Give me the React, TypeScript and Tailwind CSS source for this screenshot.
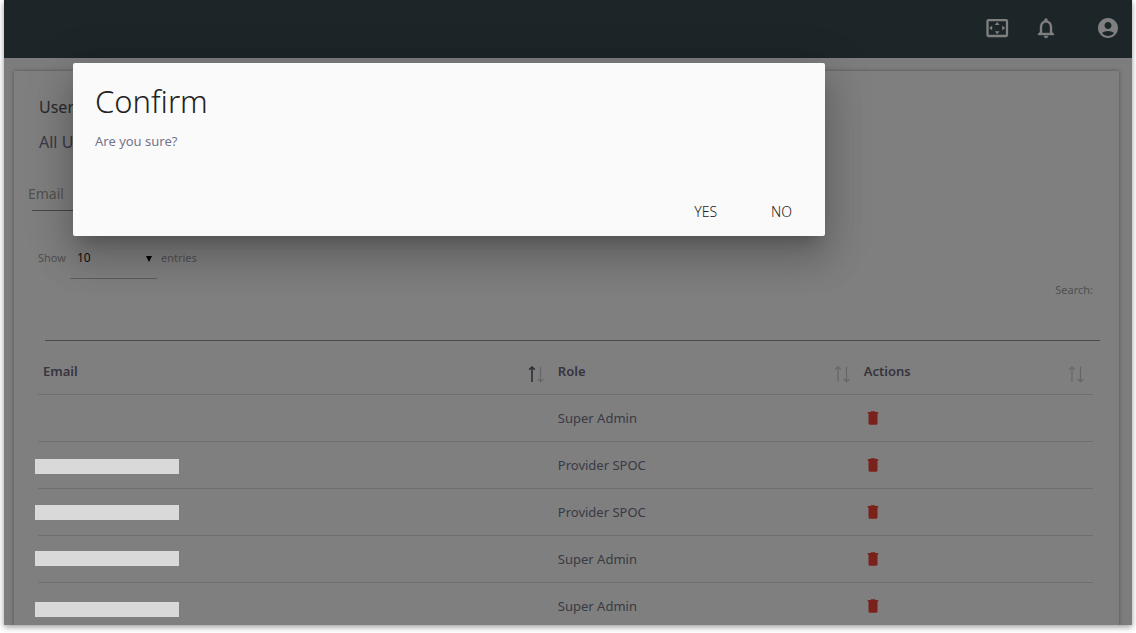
import { MdAccountCircle } from "react-icons/md";

const roles = ["Super Admin", "Provider SPOC", "Provider SPOC", "Super Admin", "Super Admin"];

function SortArrows({ ascending = false }: { ascending?: boolean }) {
  return (
    <svg width="18" height="18" viewBox="0 0 18 18" fill="none" aria-hidden="true" className="mt-1">
      <g className={ascending ? "stroke-[#5b5968]" : "stroke-[#d2d2d5]"} strokeWidth={ascending ? "1.6" : "1.3"}>
        <path d="M5 17V2.500" />
        <path d="M2.200 4.600 5 2l2.800 2.600" />
      </g>
      <g className="stroke-[#cdcdd1]" strokeWidth="1.3">
        <path d="M13.500 1.500V16" />
        <path d="M10.700 13.900 13.500 16.500l2.800-2.600" />
      </g>
    </svg>
  );
}

function OverscanIcon() {
  return (
    <svg width="24" height="24" viewBox="0 0 24 24" aria-hidden="true">
      <rect x="2.500" y="4.200" width="19.500" height="15.800" rx="1" fill="none" stroke="currentColor" strokeWidth="2.300" />
      <path fill="currentColor" d="M12.200 6 9.800 9h4.800zM12.200 18.200 14.600 15.200H9.800zM17.200 9.600v5l3-2.500zM7.200 9.600l-3 2.500 3 2.500z" />
    </svg>
  );
}

function BellIcon() {
  return (
    <svg width="24" height="24" viewBox="0 0 24 24" fill="currentColor" stroke="currentColor" strokeWidth="0.4" aria-hidden="true">
      <path d="M12 22c1.100 0 2-.900 2-2h-4c0 1.100.900 2 2 2zm6-6v-5c0-3.070-1.630-5.640-4.500-6.320V4c0-.830-.670-1.500-1.500-1.500s-1.500.670-1.500 1.500v.680C7.640 5.360 6 7.920 6 11v5l-2 2v1h16v-1l-2-2zm-2 1H8v-6c0-2.480 1.510-4.500 4-4.500s4 2.020 4 4.500v6z" />
    </svg>
  );
}

function TrashIcon() {
  return (
    <svg width="18" height="18" viewBox="0 0 24 24" fill="currentColor" aria-hidden="true">
      <path d="M19 4h-3.500l-1-1h-5l-1 1H5v2h14M6 19a2 2 0 0 0 2 2h8a2 2 0 0 0 2-2V6H6z" />
    </svg>
  );
}

function HeaderCell({ label, ascending }: { label: string; ascending?: boolean }) {
  return (
    <th scope="col" className="px-[5px] pt-0.5 text-left font-semibold">
      <div className="flex items-center justify-between pr-[3px]">
        <span>{label}</span>
        <SortArrows ascending={ascending} />
      </div>
    </th>
  );
}

function TopBar() {
  return (
    <header className="flex h-[58px] shrink-0 items-center justify-end bg-[#394a50] pr-3 pb-0.5 text-white">
      <button type="button" aria-label="Full screen" className="mr-[25px]">
        <OverscanIcon />
      </button>
      <button type="button" aria-label="Notifications" className="mr-[38px]">
        <BellIcon />
      </button>
      <button type="button" aria-label="Account">
        <MdAccountCircle size={24} />
      </button>
    </header>
  );
}

function UsersCard() {
  return (
    <section className="bg-white pt-6 shadow-[0_0_4px_rgba(0,0,0,0.35)]">
      <div className="pl-[25px]">
        <h2 className="text-base leading-6 text-[#555]">Users</h2>
        <h3 className="mt-[11px] text-base leading-6 text-[#75748a]">All Users</h3>
      </div>

      <div className="mt-[26px] flex w-1/2 flex-col pl-[14px]">
        <div className="relative pl-1">
          <label htmlFor="email" className="absolute top-1 left-0 text-sm leading-5 text-[#a2a2a2]">
            Email
          </label>
          <input id="email" type="email" className="block h-[31px] w-full border-b border-[#8c8c8c] outline-none" />
        </div>
      </div>

      <div className="mt-[27px] flex h-[41px] items-center pl-6 text-[11px] text-[#a2a2a2]">
        <label htmlFor="length" className="w-8">Show</label>
        <div className="relative h-full w-[87px]">
          <select id="length" defaultValue="10" className="h-full w-full appearance-none border-b border-[#bdbdbd] pl-[7px] text-xs text-[#222] outline-none">
            <option>10</option>
            <option>25</option>
            <option>50</option>
          </select>
          <svg width="6" height="6" viewBox="0 0 6 6" className="pointer-events-none absolute top-[18px] right-[5px]" aria-hidden="true">
            <path d="M0 0h6L3 6z" />
          </svg>
        </div>
        <span className="pl-1">entries</span>
      </div>

      <div className="pt-[3px] pr-[19px] pl-[31px]">
        <label htmlFor="search" className="block pr-[7px] text-right text-[11px] leading-4 text-[#a2a2a2]">
          Search:
        </label>
        <input id="search" type="search" className="block h-[43px] w-full border-b border-[#999] outline-none" />
      </div>

      <div className="pt-[7px] pr-[26px] pl-6">
        <table className="w-full table-fixed border-separate border-spacing-0 text-[13px] text-[#75748a] [&_td]:border-b [&_td]:border-[#dedede] [&_th]:border-b [&_th]:border-[#dedede]">
          <colgroup>
            <col className="w-[48.8%]" />
            <col className="w-[29%]" />
            <col />
          </colgroup>
          <thead className="text-[#6b6a7b]">
            <tr className="h-[47px]">
              <HeaderCell label="Email" ascending />
              <HeaderCell label="Role" />
              <HeaderCell label="Actions" />
            </tr>
          </thead>
          <tbody>
            {roles.map((role, index) => (
              <tr key={index} className="h-[47px]">
                <td />
                <td className="px-[5px] pt-0.5">{role}</td>
                <td className="px-[5px]">
                  <button type="button" aria-label="Delete user" className="block text-[#f44336]">
                    <TrashIcon />
                  </button>
                </td>
              </tr>
            ))}
          </tbody>
        </table>
      </div>
    </section>
  );
}

function ConfirmDialog() {
  return (
    <div className="absolute inset-0 bg-black/50">
      <div
        role="dialog"
        aria-modal="true"
        aria-labelledby="confirm-title"
        className="mt-[63px] ml-[69px] w-2/3 rounded-[2px] bg-[#fafafa] shadow-[0_24px_38px_3px_rgba(0,0,0,0.14),0_9px_46px_8px_rgba(0,0,0,0.12),0_11px_15px_-7px_rgba(0,0,0,0.2)]"
      >
        <div className="px-[22px] pt-[18px]">
          <h1 id="confirm-title" className="text-[31px] leading-10 font-light text-[#222]">Confirm</h1>
          <p className="mt-[10px] text-[13px] leading-5 text-[#75748a]">Are you sure?</p>
        </div>
        <div className="mt-[43px] flex justify-end gap-2 pr-[10px] pb-[6px] text-sm font-light text-[#222]">
          <button type="button" className="h-9 px-[23px]">YES</button>
          <button type="button" className="h-9 px-[23px]">NO</button>
        </div>
      </div>
    </div>
  );
}

function HiddenEmails() {
  return (
    <div className="absolute top-[459px] left-[31px] flex w-36 flex-col gap-[31px]" aria-hidden="true">
      <div className="h-[15px] bg-[#d9d9d9]" />
      <div className="h-[15px] bg-[#d9d9d9]" />
      <div className="h-[15px] bg-[#d9d9d9]" />
      <div className="mt-[5px] h-[15px] bg-[#d9d9d9]" />
    </div>
  );
}

export default function App() {
  return (
    <div className="h-screen bg-white px-1 pb-2 font-['Noto_Sans',sans-serif]">
      <div className="relative flex h-full flex-col overflow-hidden shadow-[0_2px_6px_rgba(0,0,0,0.4)]">
        <TopBar />
        <main className="min-h-0 flex-1 overflow-hidden bg-[#fafafa] pt-[13px] pr-[13px] pl-[10px]">
          <UsersCard />
        </main>
        <ConfirmDialog />
        <HiddenEmails />
      </div>
    </div>
  );
}
